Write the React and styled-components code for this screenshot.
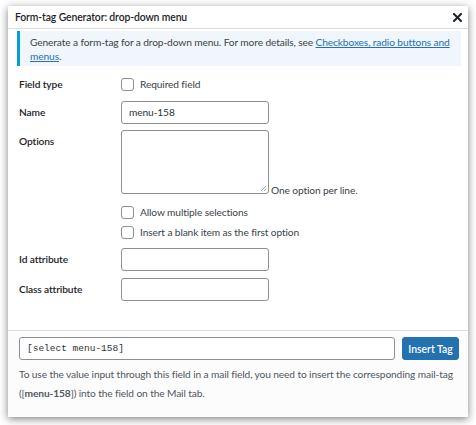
import React from 'react';
import styled, { createGlobalStyle } from 'styled-components';

const GlobalStyle = createGlobalStyle`
  html, body {
    margin: 0;
    padding: 0;
    background: #ffffff;
  }
  body {
    font-family: Lato, "Noto Sans", Arial, sans-serif;
    font-size: 10.2px;
    letter-spacing: -0.12px;
    color: #1d2327;
  }
`;

const Page = styled.div`
  padding: 6px 8px 8px 8px;
`;

const Dialog = styled.div`
  width: 460px;
  height: 411px;
  background: #ffffff;
  box-shadow: 0 2px 8px rgba(0, 0, 0, 0.5);
  display: flex;
  flex-direction: column;
`;

const TitleBar = styled.div`
  height: 22px;
  border-bottom: 1px solid #dcdcde;
  display: flex;
  align-items: center;
  justify-content: space-between;
  padding: 0 5px 0 7px;
`;

const Title = styled.h1`
  margin: 0;
  font-size: 10.4px;
  font-weight: 600;
  color: #1d2327;
`;

const CloseButton = styled.button`
  border: 0;
  background: none;
  padding: 0;
  width: 12px;
  height: 12px;
  display: flex;
  align-items: center;
  justify-content: center;
  cursor: pointer;
`;

const Content = styled.div`
  flex: 1;
  padding: 2px 7px 0 9px;
`;

const Notice = styled.div`
  border-left: 3px solid #00a0d2;
  background: #f0f6fc;
  padding: 4px 10px 3px 10px;
  line-height: 14px;
  color: #3c434a;
`;

const Link = styled.a`
  color: #2271b1;
  text-decoration: underline;
`;

const Form = styled.div`
  padding: 8px 0 0 2px;
`;

const Row = styled.div`
  display: grid;
  grid-template-columns: 102px 1fr;
  margin-top: ${(p) => p.gap || 0}px;
`;

const Label = styled.label`
  font-weight: 600;
  color: #1d2327;
  line-height: ${(p) => p.lh || 23}px;
`;

const Field = styled.div`
  display: flex;
  flex-direction: column;
`;

const CheckRow = styled.label`
  display: flex;
  align-items: center;
  gap: 6px;
  height: 20px;
  color: #3c434a;
`;

const Box = styled.span`
  width: 11px;
  height: 11px;
  border: 1px solid #8c8f94;
  border-radius: 3px;
  background: #ffffff;
  flex-shrink: 0;
`;

const TextInput = styled.div`
  box-sizing: border-box;
  width: 148px;
  height: 23px;
  border: 1px solid #8c8f94;
  border-radius: 3px;
  background: #ffffff;
  padding: 0 7px;
  line-height: 21px;
  color: #2c3338;
`;

const AreaLine = styled.div`
  display: flex;
  align-items: flex-end;
  gap: 2px;
  margin-bottom: 8px;
`;

const TextArea = styled.div`
  position: relative;
  box-sizing: border-box;
  width: 148px;
  height: 64px;
  border: 1px solid #8c8f94;
  border-radius: 3px;
  background: #ffffff;
`;

const Grip = styled.svg`
  position: absolute;
  right: 1px;
  bottom: 1px;
`;

const Hint = styled.span`
  color: #3c434a;
  line-height: 14px;
  margin-bottom: -3px;
`;

const Footer = styled.div`
  height: 80px;
  border-top: 1px solid #dcdcde;
  background: #fcfcfc;
  padding: 6px 9px 0 11px;
`;

const TagLine = styled.div`
  display: flex;
  gap: 7px;
`;

const TagInput = styled.div`
  box-sizing: border-box;
  flex: 1;
  height: 23px;
  border: 1px solid #8c8f94;
  border-radius: 3px;
  background: #ffffff;
  padding: 0 7px;
  line-height: 21px;
  font-family: "Liberation Mono", "DejaVu Sans Mono", monospace;
  font-size: 9.5px;
  letter-spacing: 0;
  color: #2c3338;
`;

const InsertButton = styled.button`
  width: 57px;
  height: 23px;
  border: 1px solid #2271b1;
  border-radius: 3px;
  background: #2271b1;
  color: #ffffff;
  font-family: inherit;
  font-size: 10.4px;
  font-weight: 600;
  padding: 0;
`;

const Description = styled.p`
  margin: 5px 0 0 0;
  line-height: 19px;
  color: #50575e;
`;

const Checkbox = ({ children }) => (
  <CheckRow>
    <Box />
    {children}
  </CheckRow>
);

const App = () => (
  <Page>
    <GlobalStyle />
    <Dialog>
      <TitleBar>
        <Title>Form-tag Generator: drop-down menu</Title>
        <CloseButton aria-label="Close">
          <svg width="9" height="9" viewBox="0 0 9 9">
            <path d="M1 1 L8 8 M8 1 L1 8" stroke="#1d2327" strokeWidth="2" strokeLinecap="square" />
          </svg>
        </CloseButton>
      </TitleBar>
      <Content>
        <Notice>
          Generate a form-tag for a drop-down menu. For more details, see{' '}
          <Link href="#">Checkboxes, radio buttons and menus</Link>.
        </Notice>
        <Form>
          <Row>
            <Label lh={20}>Field type</Label>
            <Field>
              <Checkbox>Required field</Checkbox>
            </Field>
          </Row>
          <Row gap={7}>
            <Label>Name</Label>
            <TextInput>menu-158</TextInput>
          </Row>
          <Row gap={6}>
            <Label>Options</Label>
            <Field>
              <AreaLine>
                <TextArea>
                  <Grip width="7" height="7" viewBox="0 0 7 7">
                    <path d="M6 1 L1 6 M6 4 L4 6" stroke="#8c8f94" strokeWidth="0.8" />
                  </Grip>
                </TextArea>
                <Hint>One option per line.</Hint>
              </AreaLine>
              <Checkbox>Allow multiple selections</Checkbox>
              <Checkbox>Insert a blank item as the first option</Checkbox>
            </Field>
          </Row>
          <Row gap={6}>
            <Label>Id attribute</Label>
            <TextInput />
          </Row>
          <Row gap={7}>
            <Label>Class attribute</Label>
            <TextInput />
          </Row>
        </Form>
      </Content>
      <Footer>
        <TagLine>
          <TagInput>[select menu-158]</TagInput>
          <InsertButton>Insert Tag</InsertButton>
        </TagLine>
        <Description>
          To use the value input through this field in a mail field, you need to insert the corresponding mail-tag
          ([<b>menu-158</b>]) into the field on the Mail tab.
        </Description>
      </Footer>
    </Dialog>
  </Page>
);

export default App;
